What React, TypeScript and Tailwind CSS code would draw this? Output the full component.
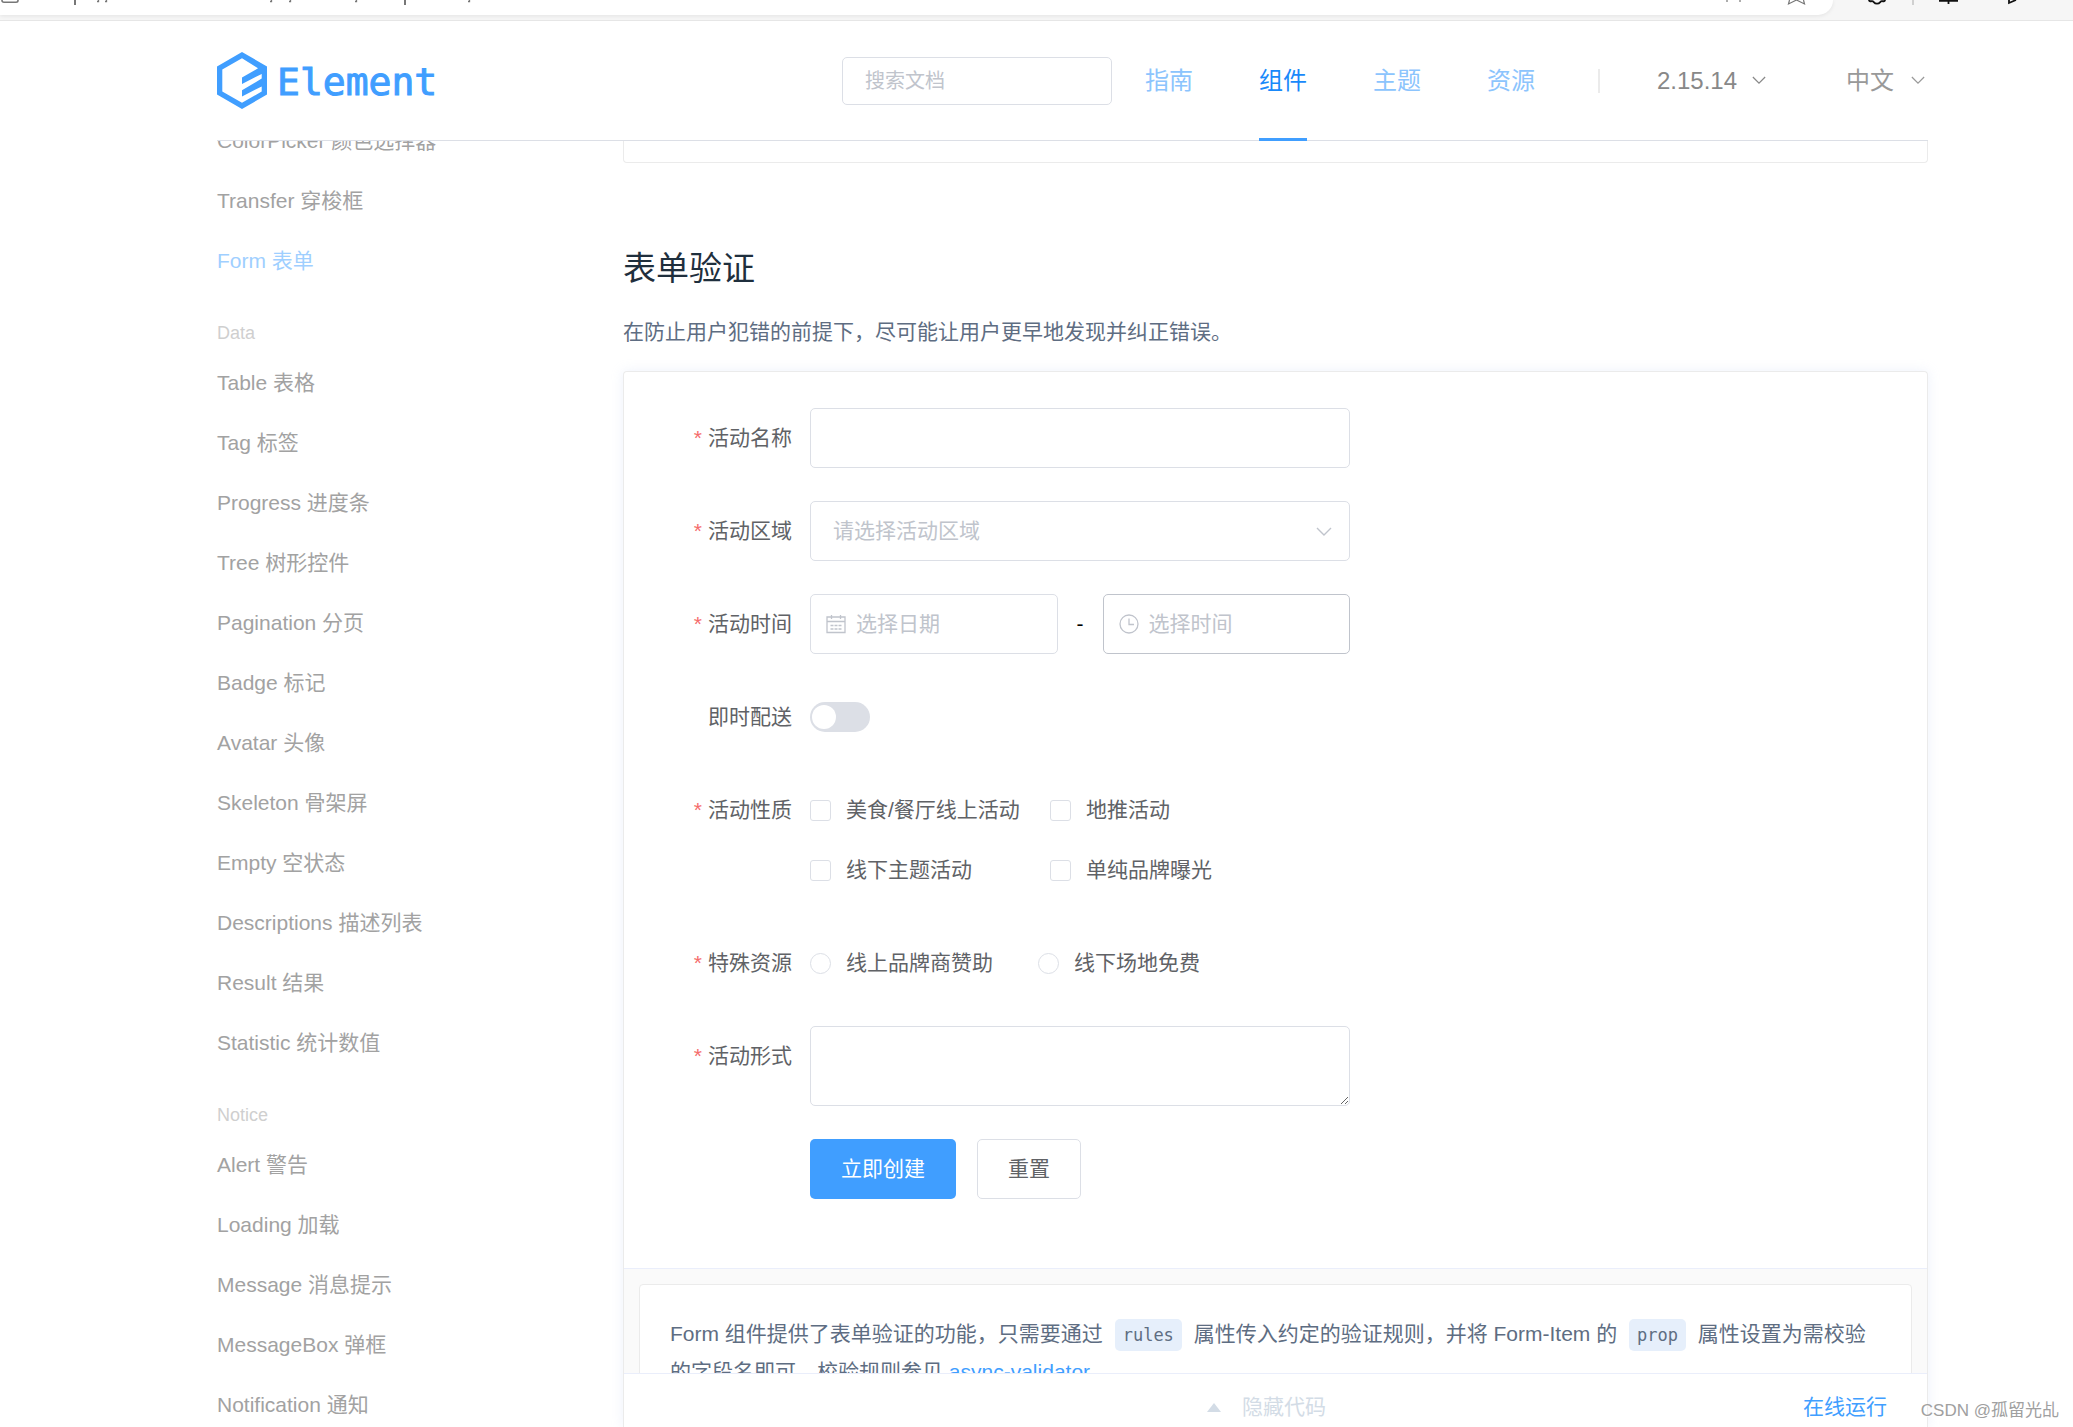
import type { ReactNode } from 'react';

const navItems = [
  { label: '指南', active: false },
  { label: '组件', active: true },
  { label: '主题', active: false },
  { label: '资源', active: false },
];

const sideGroups = [
  { title: '', items: ['ColorPicker 颜色选择器', 'Transfer 穿梭框', 'Form 表单'] },
  {
    title: 'Data',
    items: [
      'Table 表格',
      'Tag 标签',
      'Progress 进度条',
      'Tree 树形控件',
      'Pagination 分页',
      'Badge 标记',
      'Avatar 头像',
      'Skeleton 骨架屏',
      'Empty 空状态',
      'Descriptions 描述列表',
      'Result 结果',
      'Statistic 统计数值',
    ],
  },
  {
    title: 'Notice',
    items: ['Alert 警告', 'Loading 加载', 'Message 消息提示', 'MessageBox 弹框', 'Notification 通知'],
  },
];

const inputClass =
  'w-full rounded-[5px] border border-[#dcdfe6] bg-white text-[#606266] outline-none placeholder:text-[#c0c4cc]';

function Chevron({ className }: { className: string }) {
  return (
    <svg className={className} viewBox="0 0 16 10" fill="none" stroke="currentColor" strokeWidth="1.4">
      <path d="M1 1l7 7 7-7" />
    </svg>
  );
}

function CalendarIcon() {
  return (
    <svg className="h-5 w-5" viewBox="0 0 20 20" fill="none" stroke="currentColor" strokeWidth="1.3">
      <path d="M1 3h18v15.500H1zM1 7.500h18M5.500 1v4M14.500 1v4" />
      <path d="M4.500 11.500h11M4.500 15h11" strokeDasharray="3 1" />
    </svg>
  );
}

function ClockIcon() {
  return (
    <svg className="h-5 w-5" viewBox="0 0 20 20" fill="none" stroke="currentColor" strokeWidth="1.3">
      <circle cx="10" cy="10" r="9" />
      <path d="M10 4.500v6h5" />
    </svg>
  );
}

function BrowserStrip() {
  return (
    <div className="flex h-[21px] shrink-0 items-start border-b border-[#e6e6e6] bg-[#f6f6f6]">
      <div className="h-[15px] flex-1 rounded-br-[20px] bg-white shadow-[0_1px_4px_rgba(0,0,0,0.08)]">
        <div className="flex justify-between">
          <svg className="h-[6px] w-[490px]" viewBox="0 0 490 6" fill="none" stroke="#777" strokeWidth="1.3">
            <path d="M2 0v0.500q0 1.700 2 1.700h12q2 0 2-1.700V0" strokeWidth="1.6" />
            <path d="M75 0v5M405 0v5" strokeWidth="2" />
            <path d="M97 1.500h1.500V0M105 1.500h1.500V0M270 1.500h1.500V0M289 1.500h1.500V0M355 1.500h1.500V0M468 1.500h1.500V0" />
          </svg>
          <svg className="h-[6px] w-[123px]" viewBox="0 0 123 6" fill="none" stroke="#777" strokeWidth="1.2">
            <path d="M17 0v2M30 0v2M79.500 0l-1 4 8-4 8 4-1-4" />
          </svg>
        </div>
      </div>
      <svg className="h-[6px] w-[240px] shrink-0" viewBox="0 0 240 6" fill="none" stroke="#111" strokeWidth="1.8">
        <path d="M36 0q0 1.500 3 1.200c2-.2 1.500 2.500 5 2.500s3-2.700 5-2.500q3 .3 3-1.200" />
        <path d="M80 0v5" stroke="#ccc" />
        <path d="M106 0.800h8q2 0 2-1M125 0.800h-7q-2 0-2-1M115.500 0v4" />
        <path d="M176 0v3l7-3" />
      </svg>
    </div>
  );
}

function Logo() {
  return (
    <a href="#" className="flex items-center gap-2.5 text-[#409eff]">
      <svg className="h-[57px] w-[50px]" viewBox="0 0 50 57">
        <path
          fill="currentColor"
          fillRule="evenodd"
          d="M25 0L50 14.500V42.500L25 57L0 42.500V14.500ZM25 6.300L5.300 17.400V39.600L25 50.700L44.700 39.600V34.400L25 44.500V38.300L44.700 26.600V21.900L25 32V25.600L41 16.300Z"
        />
      </svg>
      <span className="pt-0.5 font-['DejaVu_Sans_Mono',monospace] text-[38px] leading-none [-webkit-text-stroke:1px_#409eff]">
        Element
      </span>
    </a>
  );
}

function Header() {
  return (
    <header className="mr-[145px] ml-[217px] flex h-[120px] shrink-0 items-center border-b border-[#dcdfe6] text-2xl">
      <Logo />
      <input
        type="text"
        aria-label="搜索文档"
        placeholder="搜索文档"
        className="ml-auto h-12 w-[270px] rounded-[5px] border border-[#dcdfe6] px-[22px] pt-0.5 text-xl outline-none placeholder:text-[#c0c4cc]"
      />
      <nav className="ml-[33px] flex h-[120px] gap-[66px]">
        {navItems.map((n) => (
          <a
            key={n.label}
            href="#"
            className={
              n.active
                ? 'flex items-center border-b-[3px] border-[#409eff] pt-[3px] text-[#1989fa]'
                : 'flex items-center text-[#8cc4fd]'
            }
          >
            {n.label}
          </a>
        ))}
      </nav>
      <div className="ml-[63px] h-6 w-0.5 bg-[#ebebeb]" />
      <button type="button" className="ml-[57px] flex items-center gap-[15px] text-[#888]">
        2.15.14
        <Chevron className="h-[9px] w-[14px]" />
      </button>
      <button type="button" className="mr-[3px] ml-20 flex items-center gap-[17px] text-[#999]">
        中文
        <Chevron className="h-[9px] w-[14px]" />
      </button>
    </header>
  );
}

function Sidebar() {
  return (
    <aside className="-mt-[30px] w-[406px] shrink-0">
      {sideGroups.map((g) => (
        <div key={g.title}>
          {g.title && <div className="pt-[23px] text-lg leading-[39px] text-[#cfcfcf]">{g.title}</div>}
          <ul>
            {g.items.map((item) => (
              <li key={item} className="h-[60px] leading-[60px]">
                <a href="#" className={item === 'Form 表单' ? 'text-[#9fcfff]' : 'text-[#a2a2a2]'}>
                  {item}
                </a>
              </li>
            ))}
          </ul>
        </div>
      ))}
    </aside>
  );
}

function FormItem({
  label,
  htmlFor,
  required = true,
  children,
}: {
  label: string;
  htmlFor?: string;
  required?: boolean;
  children: ReactNode;
}) {
  const text = (
    <>
      {required && <span className="mr-1.5 text-[#f56c6c]">*</span>}
      {label}
    </>
  );
  const cls = 'w-[150px] shrink-0 pr-[18px] text-right leading-[60px] text-[#606266]';
  return (
    <div className="mb-[33px] flex">
      {htmlFor ? (
        <label htmlFor={htmlFor} className={cls}>
          {text}
        </label>
      ) : (
        <span className={cls}>{text}</span>
      )}
      <div className="min-w-0 flex-1">{children}</div>
    </div>
  );
}

function Choice({ type, name, label }: { type: 'checkbox' | 'radio'; name: string; label: string }) {
  return (
    <label className="flex h-[60px] items-center gap-[15px] text-[#606266]">
      <input
        type={type}
        name={name}
        className={
          type === 'radio'
            ? 'h-[21px] w-[21px] appearance-none rounded-full border border-[#dcdfe6] bg-white checked:border-[6px] checked:border-[#409eff]'
            : 'h-[21px] w-[21px] appearance-none rounded-[3px] border border-[#dcdfe6] bg-white checked:bg-[#409eff]'
        }
      />
      {label}
    </label>
  );
}

function DemoForm() {
  return (
    <form className="max-w-[690px] pt-9 pb-9" onSubmit={(e) => e.preventDefault()}>
      <FormItem label="活动名称" htmlFor="name">
        <input id="name" type="text" className={`${inputClass} block h-[60px] px-[22px]`} />
      </FormItem>
      <FormItem label="活动区域" htmlFor="region">
        <div className="relative">
          <select
            id="region"
            defaultValue=""
            className="block h-[60px] w-full appearance-none rounded-[5px] border border-[#dcdfe6] bg-white px-[22px] text-[#c0c4cc] outline-none"
          >
            <option value="">请选择活动区域</option>
            <option value="shanghai">区域一</option>
            <option value="beijing">区域二</option>
          </select>
          <Chevron className="pointer-events-none absolute top-[26px] right-[18px] h-[10px] w-4 text-[#c0c4cc]" />
        </div>
      </FormItem>
      <FormItem label="活动时间" htmlFor="date">
        <div className="flex">
          <div className="relative flex-1 text-[#c0c4cc]">
            <input
              id="date"
              type="text"
              placeholder="选择日期"
              className={`${inputClass} block h-[60px] pl-[45px]`}
            />
            <span className="pointer-events-none absolute inset-y-0 left-4 flex items-center">
              <CalendarIcon />
            </span>
          </div>
          <span className="w-[45px] text-center leading-[60px] text-black">-</span>
          <div className="relative flex-1 text-[#c0c4cc]">
            <input
              type="text"
              aria-label="选择时间"
              placeholder="选择时间"
              className="block h-[60px] w-full rounded-[5px] border border-[#c0c4cc] bg-white pl-[45px] text-[#606266] outline-none placeholder:text-[#c0c4cc]"
            />
            <span className="pointer-events-none absolute inset-y-0 left-4 flex items-center">
              <ClockIcon />
            </span>
          </div>
        </div>
      </FormItem>
      <FormItem label="即时配送" htmlFor="delivery" required={false}>
        <div className="flex h-[60px] items-center">
          <input
            id="delivery"
            type="checkbox"
            role="switch"
            className="h-[30px] w-[60px] appearance-none rounded-full bg-[#dcdfe6] before:mt-[3px] before:ml-0.5 before:block before:h-6 before:w-6 before:rounded-full before:bg-white before:content-[''] checked:bg-[#409eff] checked:before:ml-[34px]"
          />
        </div>
      </FormItem>
      <FormItem label="活动性质">
        <div className="grid grid-cols-[240px_1fr]">
          <Choice type="checkbox" name="type" label="美食/餐厅线上活动" />
          <Choice type="checkbox" name="type" label="地推活动" />
          <Choice type="checkbox" name="type" label="线下主题活动" />
          <Choice type="checkbox" name="type" label="单纯品牌曝光" />
        </div>
      </FormItem>
      <FormItem label="特殊资源">
        <div className="flex gap-[45px]">
          <Choice type="radio" name="resource" label="线上品牌商赞助" />
          <Choice type="radio" name="resource" label="线下场地免费" />
        </div>
      </FormItem>
      <FormItem label="活动形式" htmlFor="desc">
        <textarea id="desc" className={`${inputClass} block h-20 resize-y px-[22px] py-2`} />
      </FormItem>
      <div className="flex gap-[21px] pl-[150px] pb-[33px]">
        <button type="submit" className="h-[60px] rounded-[5px] bg-[#409eff] px-[31px] text-white">
          立即创建
        </button>
        <button
          type="button"
          className="h-[60px] rounded-[5px] border border-[#dcdfe6] bg-white px-[30px] text-[#606266]"
        >
          重置
        </button>
      </div>
    </form>
  );
}

function Code({ children }: { children: ReactNode }) {
  return (
    <code className="mx-1.5 inline-block rounded-[5px] bg-[#e6effb] px-2 font-['DejaVu_Sans_Mono',monospace] text-[17px] leading-8">
      {children}
    </code>
  );
}

function Demo() {
  return (
    <section className="flex min-h-0 flex-1 flex-col rounded-t-[4px] border border-b-0 border-[#ebebeb] shadow-[0_0_12px_rgba(232,237,250,0.8)]">
      <div className="px-9">
        <DemoForm />
      </div>
      <div className="min-h-0 flex-1 overflow-hidden border-t border-[#eaeefb] bg-[#fafafa] p-[15px]">
        <div className="rounded-[4px] border border-[#ebebeb] bg-white p-[30px] text-[#5e6d82]">
          <p className="leading-[38px]">
            Form 组件提供了表单验证的功能，只需要通过 <Code>rules</Code> 属性传入约定的验证规则，并将 Form-Item 的{' '}
            <Code>prop</Code> 属性设置为需校验的字段名即可。校验规则参见{' '}
            <a href="#" className="text-[#409eff]">
              async-validator
            </a>
          </p>
        </div>
      </div>
      <div className="grid h-[54px] shrink-0 grid-cols-[1fr_auto_1fr] overflow-hidden border-t border-[#eaeefb] leading-[66px]">
        <button
          type="button"
          className="col-start-2 flex h-[66px] items-center gap-[21px] pr-[18px] text-[#d3dce6]"
        >
          <svg className="h-[9px] w-[14px]" viewBox="0 0 14 9" fill="currentColor">
            <path d="M7 0l7 9H0z" />
          </svg>
          隐藏代码
        </button>
        <a href="#" className="mr-10 justify-self-end text-[#409eff]">
          在线运行
        </a>
      </div>
    </section>
  );
}

export default function App() {
  return (
    <div className="relative flex h-screen flex-col overflow-hidden bg-white font-['Liberation_Sans','Noto_Sans_CJK_SC',sans-serif] text-[21px]">
      <BrowserStrip />
      <Header />
      <div className="flex min-h-0 flex-1 overflow-hidden pr-[145px] pl-[217px]">
        <Sidebar />
        <main className="flex min-w-0 flex-1 flex-col">
          <div className="h-[22px] shrink-0 rounded-b-[4px] border border-t-0 border-[#ebebeb]" />
          <h3 className="mt-[82px] text-[33px] leading-[48px] text-[#1f2f3d]">表单验证</h3>
          <p className="my-5 leading-[38px] text-[#5e6d82]">
            在防止用户犯错的前提下，尽可能让用户更早地发现并纠正错误。
          </p>
          <Demo />
        </main>
      </div>
      <div className="pointer-events-none absolute right-[14px] bottom-1 text-[17px] text-[#a0a0a0] [text-shadow:1px_1px_0_#fff]">
        CSDN @孤留光乩
      </div>
    </div>
  );
}
